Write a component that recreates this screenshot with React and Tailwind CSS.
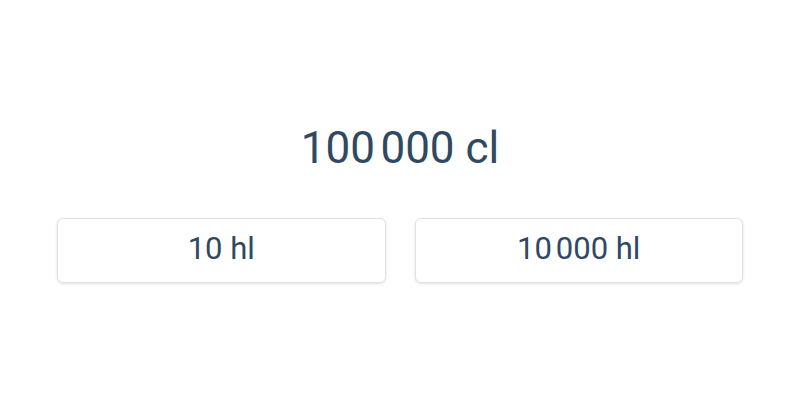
export default function App() {
  return (
    <div className="w-[800px] h-[400px] bg-white font-['Roboto',sans-serif] text-[#2f4962]">
      <div className="pt-[122px] text-center text-[44px] leading-[52px]">100{'\u202F'}000 cl</div>
      <div className="mt-[44px] px-[57px] grid grid-cols-2 gap-[29px]">
        <button className="h-[65px] pb-[2px] rounded-md border border-[#e2e2e2] bg-white shadow-[0_1px_3px_rgba(0,0,0,0.12)] text-[31px]">
          10 hl
        </button>
        <button className="h-[65px] pb-[2px] rounded-md border border-[#e2e2e2] bg-white shadow-[0_1px_3px_rgba(0,0,0,0.12)] text-[31px]">
          10{'\u202F'}000 hl
        </button>
      </div>
    </div>
  );
}
